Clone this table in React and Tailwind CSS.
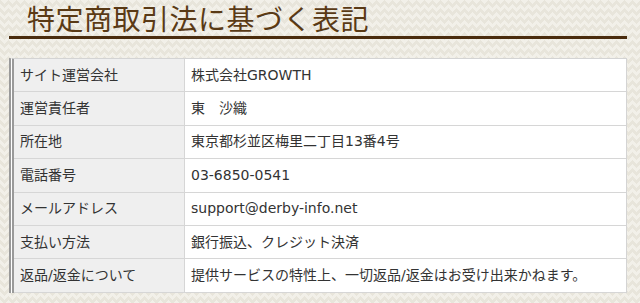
const rows = [
  ['サイト運営会社', '株式会社GROWTH'],
  ['運営責任者', '東　沙織'],
  ['所在地', '東京都杉並区梅里二丁目13番4号'],
  ['電話番号', '03-6850-0541'],
  ['メールアドレス', 'support@derby-info.net'],
  ['支払い方法', '銀行振込、クレジット決済'],
  ['返品/返金について', '提供サービスの特性上、一切返品/返金はお受け出来かねます。'],
]

export default function App() {
  return (
    <div className="w-[640px] h-[303px] overflow-hidden bg-[#e8e5db] bg-[linear-gradient(135deg,#f2f0e9_25%,transparent_25%),linear-gradient(225deg,#f2f0e9_25%,transparent_25%),linear-gradient(315deg,#f2f0e9_25%,transparent_25%),linear-gradient(45deg,#f2f0e9_25%,transparent_25%)] bg-size-[8px_8px] bg-position-[-4px_0,-4px_0,0_0,0_0] font-['Noto_Sans_CJK_JP','Noto_Sans',sans-serif]">
      <div className="ml-[9px] w-[618px]">
        {/* heading */}
        <h1 className="pl-[18px] text-[28px] leading-[36px] text-[#5a3a15] border-b-[3px] border-[#4a2c0e] tracking-[0.5px]">
          特定商取引法に基づく表記
        </h1>

        {/* info table */}
        <div className="mt-[19px] bg-white border-t border-r border-[#d4d4d4] border-l-[5px] border-l-[#9a9a9a] border-double font-['DejaVu_Sans','Noto_Sans_CJK_JP',sans-serif]">
          {rows.map(([label, value]) => (
            <div key={label} className="flex h-[33.4px] border-b border-[#d6d6d6] text-[14px] text-[#333]">
              <div className="w-[171px] shrink-0 bg-[#efefef] border-r border-[#d6d6d6] flex items-center pl-[6px]">
                {label}
              </div>
              <div className="flex-1 flex items-center pl-[6px]">{value}</div>
            </div>
          ))}
        </div>
      </div>
    </div>
  )
}
